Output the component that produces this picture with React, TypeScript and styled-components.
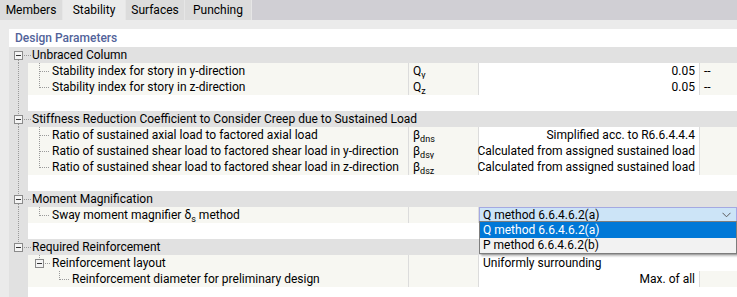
import React from "react";
import styled, { createGlobalStyle } from "styled-components";

const FONT = 12;

const Global = createGlobalStyle`
  html, body { margin: 0; padding: 0; background: #ebebeb; }
  body {
    font-family: Roboto, "Noto Sans", "Liberation Sans", sans-serif;
    font-size: ${FONT}px;
    color: #000;
  }
`;

const Page = styled.div`
  width: 737px;
  height: 297px;
  overflow: hidden;
  display: flex;
  flex-direction: column;
  background: #ebebeb;
`;

const TabBar = styled.div`
  display: flex;
  height: 20px;
  background: #d0cfd4;
  flex: none;
`;

const Tab = styled.div<{ $active?: boolean; $w: number }>`
  width: ${(p) => p.$w}px;
  box-sizing: border-box;
  display: flex;
  align-items: center;
  justify-content: center;
  background: ${(p) => (p.$active ? "#ebebeb" : "#dcdcdc")};
  border-right: 1px solid #e6e6e6;
`;

const Strip = styled.div`
  height: 9px;
  flex: none;
`;

const Body = styled.div`
  display: flex;
  flex: 1;
`;

const Gutter = styled.div`
  width: 9px;
  flex: none;
  background: #ebebeb;
`;

const Table = styled.div`
  flex: 1;
  display: flex;
  flex-direction: column;
  background: #fff;
`;

const HeaderRow = styled.div`
  height: 18px;
  display: flex;
  align-items: center;
  padding-left: 6px;
  font-weight: 500;
  color: #52639a;
`;

const GroupRow = styled.div`
  height: 16px;
  display: flex;
  align-items: center;
  background: #e1e1e1;
`;

const Row = styled.div`
  display: grid;
  grid-template-columns: 19px 380px 70px 221px 38px;
  height: 16px;
`;

const Filler = styled.div`
  display: grid;
  grid-template-columns: 19px 1fr;
  flex: 1;
`;

const TreeCol = styled.div<{ $line?: boolean }>`
  background-color: #e1e1e1;
  ${(p) =>
    p.$line
      ? `background-image: repeating-linear-gradient(to bottom, #9a9a9a 0 1px, transparent 1px 2px);
         background-size: 1px 100%;
         background-position: 9px 0;
         background-repeat: no-repeat;`
      : ""}
`;

const Desc = styled.div<{ $blank?: boolean }>`
  display: flex;
  align-items: center;
  background: ${(p) => (p.$blank ? "#fff" : "#f7f7f2")};
  white-space: nowrap;
  overflow: hidden;
  ${(p) => (p.$blank ? "grid-column: 2 / 6;" : "")}
`;

const Sym = styled.div`
  display: flex;
  align-items: center;
  background: #f7f7f2;
  border-left: 1px solid #dcdcdc;
  padding-left: 4px;
`;

const Sub = styled.sub`
  font-size: 9px;
  vertical-align: -3px;
  line-height: 0;
`;

const Value = styled.div<{ $span?: boolean; $left?: boolean }>`
  display: flex;
  align-items: center;
  justify-content: ${(p) => (p.$left ? "flex-start" : "flex-end")};
  background: #fff;
  border-left: 1px solid #dcdcdc;
  padding: 0 4px;
  white-space: nowrap;
  ${(p) => (p.$span ? "grid-column: 4 / 6;" : "")}
`;

const ComboCell = styled.div`
  grid-column: 4 / 6;
  border-left: 1px solid #dcdcdc;
  background: #fff;
  position: relative;
  z-index: 5;
`;

const Unit = styled.div`
  display: flex;
  align-items: center;
  background: #f7f7f2;
  border-left: 1px solid #dcdcdc;
  padding-left: 4px;
`;

const Label = styled.span`
  white-space: nowrap;
`;

const Combo = styled.div`
  height: 15px;
  box-sizing: border-box;
  border: 1px solid #a4a9e2;
  background: #cce4f7;
  display: flex;
  align-items: center;
  justify-content: space-between;
  padding: 0 5px 0 3px;
`;

const Popup = styled.div`
  position: absolute;
  left: 0;
  right: 0;
  top: 14px;
  box-sizing: border-box;
  border: 1px solid #7d7d7d;
  background: #f2f2f2;
  box-shadow: 2px 2px 2px rgba(0, 0, 0, 0.28);
`;

const Option = styled.div<{ $sel?: boolean }>`
  height: 15.5px;
  display: flex;
  align-items: center;
  padding-left: 3px;
  background: ${(p) => (p.$sel ? "#0078d7" : "#f2f2f2")};
  color: ${(p) => (p.$sel ? "#fff" : "#000")};
`;

const DOT = "#9a9a9a";

const GroupGuide = ({ first, last }: { first?: boolean; last?: boolean }) => (
  <svg width={23} height={16} style={{ flex: "none" }} shapeRendering="crispEdges">
    {!first && <line x1={9.5} y1={0} x2={9.5} y2={4} stroke={DOT} strokeDasharray="1 1" />}
    {!last && <line x1={9.5} y1={13} x2={9.5} y2={16} stroke={DOT} strokeDasharray="1 1" />}
    <rect x={5.5} y={4.5} width={8} height={8} fill="#f4f4f4" stroke="#8a8a8a" />
    <line x1={7} y1={8.5} x2={12} y2={8.5} stroke="#333" />
    <line x1={15} y1={8.5} x2={22} y2={8.5} stroke={DOT} strokeDasharray="1 1" />
  </svg>
);

const ChildGuide = ({ last, x = 11, w = 24 }: { last?: boolean; x?: number; w?: number }) => (
  <svg width={w} height={16} style={{ flex: "none" }} shapeRendering="crispEdges">
    <line x1={x + 0.5} y1={0} x2={x + 0.5} y2={last ? 9 : 16} stroke={DOT} strokeDasharray="1 1" />
    <line x1={x + 1} y1={8.5} x2={w - 2} y2={8.5} stroke={DOT} strokeDasharray="1 1" />
  </svg>
);

const NodeGuide = () => (
  <svg width={24} height={16} style={{ flex: "none" }} shapeRendering="crispEdges">
    <line x1={11.5} y1={0} x2={11.5} y2={4} stroke={DOT} strokeDasharray="1 1" />
    <rect x={7.5} y={4.5} width={8} height={8} fill="#f4f4f4" stroke="#8a8a8a" />
    <line x1={9} y1={8.5} x2={14} y2={8.5} stroke="#333" />
    <line x1={17} y1={8.5} x2={22} y2={8.5} stroke={DOT} strokeDasharray="1 1" />
  </svg>
);

const Chevron = () => (
  <svg width={9} height={6} viewBox="0 0 9 6">
    <path d="M0.5 0.8 L4.5 4.8 L8.5 0.8" fill="none" stroke="#5a5a5a" strokeWidth={1} />
  </svg>
);

type Item = { label: string; sym: [string, string]; value: string; unit?: string };

const DataRow = ({ item, last }: { item: Item; last?: boolean }) => (
  <Row>
    <TreeCol $line />
    <Desc>
      <ChildGuide last={last} />
      <Label>{item.label}</Label>
    </Desc>
    <Sym>
      <span>
        {item.sym[0]}
        <Sub>{item.sym[1]}</Sub>
      </span>
    </Sym>
    <Value>{item.value}</Value>
    <Unit>{item.unit ?? ""}</Unit>
  </Row>
);

const BlankRow = ({ line }: { line?: boolean }) => (
  <Row>
    <TreeCol $line={line} />
    <Desc $blank />
  </Row>
);

const unbraced: Item[] = [
  { label: "Stability index for story in y-direction", sym: ["Q", "y"], value: "0.05", unit: "--" },
  { label: "Stability index for story in z-direction", sym: ["Q", "z"], value: "0.05", unit: "--" },
];

const stiffness: Item[] = [
  { label: "Ratio of sustained axial load to factored axial load", sym: ["β", "dns"], value: "Simplified acc. to R6.6.4.4.4" },
  { label: "Ratio of sustained shear load to factored shear load in y-direction", sym: ["β", "dsy"], value: "Calculated from assigned sustained load" },
  { label: "Ratio of sustained shear load to factored shear load in z-direction", sym: ["β", "dsz"], value: "Calculated from assigned sustained load" },
];

export default function App() {
  return (
    <>
      <Global />
      <Page>
        <TabBar>
          <Tab $w={63}>Members</Tab>
          <Tab $w={63} $active>Stability</Tab>
          <Tab $w={59}>Surfaces</Tab>
          <Tab $w={67}>Punching</Tab>
        </TabBar>
        <Strip />
        <Body>
          <Gutter />
          <Table>
            <HeaderRow>Design Parameters</HeaderRow>

            <GroupRow>
              <GroupGuide first />
              <Label>Unbraced Column</Label>
            </GroupRow>
            {unbraced.map((it, i) => (
              <DataRow key={it.label} item={it} last={i === unbraced.length - 1} />
            ))}
            <BlankRow line />

            <GroupRow>
              <GroupGuide />
              <Label>Stiffness Reduction Coefficient to Consider Creep due to Sustained Load</Label>
            </GroupRow>
            {stiffness.map((it, i) => (
              <DataRow key={it.label} item={it} last={i === stiffness.length - 1} />
            ))}
            <BlankRow line />

            <GroupRow>
              <GroupGuide />
              <Label>Moment Magnification</Label>
            </GroupRow>
            <Row>
              <TreeCol $line />
              <Desc>
                <ChildGuide last />
                <Label>
                  Sway moment magnifier δ<Sub>s</Sub> method
                </Label>
              </Desc>
              <Sym />
              <ComboCell>
                <Combo>
                  <span>Q method 6.6.4.6.2(a)</span>
                  <Chevron />
                </Combo>
                <Popup>
                  <Option $sel>Q method 6.6.4.6.2(a)</Option>
                  <Option>P method 6.6.4.6.2(b)</Option>
                </Popup>
              </ComboCell>
            </Row>
            <BlankRow line />

            <GroupRow>
              <GroupGuide last />
              <Label>Required Reinforcement</Label>
            </GroupRow>
            <Row>
              <TreeCol />
              <Desc>
                <NodeGuide />
                <Label>Reinforcement layout</Label>
              </Desc>
              <Sym />
              <Value $span $left>Uniformly surrounding</Value>
            </Row>
            <Row>
              <TreeCol />
              <Desc>
                <ChildGuide last x={31} w={44} />
                <Label>Reinforcement diameter for preliminary design</Label>
              </Desc>
              <Sym />
              <Value>Max. of all</Value>
              <Unit />
            </Row>
            <Filler>
              <TreeCol />
              <div />
            </Filler>
          </Table>
        </Body>
      </Page>
    </>
  );
}
